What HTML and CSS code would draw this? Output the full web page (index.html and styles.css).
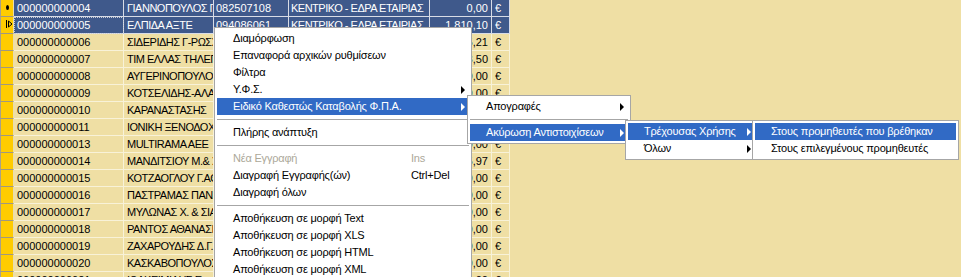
FILE: index.html
```html
<!DOCTYPE html>
<html lang="el">
<head>
<meta charset="utf-8">
<title>Προμηθευτές</title>
<link rel="stylesheet" href="styles.css">
</head>
<body>
<div class="grid">
  <div class="row sel"><div class="c ind"><span class="dot"></span></div><div class="c code">000000000004</div><div class="c name">ΓΙΑΝΝΟΠΟΥΛΟΣ ΓΕΩΡΓΙΟΣ</div><div class="c phone">082507108</div><div class="c branch">ΚΕΝΤΡΙΚΟ - ΕΔΡΑ ΕΤΑΙΡΙΑΣ</div><div class="c amt">0,00</div><div class="c cur">€</div></div>
  <div class="row sel"><div class="c ind"><svg class="arr" width="7" height="8" viewBox="0 0 7 8"><path d="M0.5 0 V8 M2.5 1 L6 4 L2.5 7 Z" fill="none" stroke="#000" stroke-width="1"/></svg></div><div class="c code focus">000000000005</div><div class="c name">ΕΛΠΙΔΑ ΑΞΤΕ</div><div class="c phone">094086061</div><div class="c branch">ΚΕΝΤΡΙΚΟ - ΕΔΡΑ ΕΤΑΙΡΙΑΣ</div><div class="c amt">1.810,10</div><div class="c cur">€</div></div>
  <div class="row"><div class="c ind"></div><div class="c code">000000000006</div><div class="c name">ΣΙΔΕΡΙΔΗΣ Γ-ΡΩΣΣΙΔΗΣ</div><div class="c phone">082504411</div><div class="c branch">ΚΕΝΤΡΙΚΟ - ΕΔΡΑ ΕΤΑΙΡΙΑΣ</div><div class="c amt">1.235,21</div><div class="c cur">€</div></div>
  <div class="row"><div class="c ind"></div><div class="c code">000000000007</div><div class="c name">ΤΙΜ ΕΛΛΑΣ ΤΗΛΕΠΙΚΟΙΝΩΝΙΕΣ</div><div class="c phone">094505500</div><div class="c branch">ΚΕΝΤΡΙΚΟ - ΕΔΡΑ ΕΤΑΙΡΙΑΣ</div><div class="c amt">18,50</div><div class="c cur">€</div></div>
  <div class="row"><div class="c ind"></div><div class="c code">000000000008</div><div class="c name">ΑΥΓΕΡΙΝΟΠΟΥΛΟΣ</div><div class="c phone">082503320</div><div class="c branch">ΚΕΝΤΡΙΚΟ - ΕΔΡΑ ΕΤΑΙΡΙΑΣ</div><div class="c amt">0,00</div><div class="c cur">€</div></div>
  <div class="row"><div class="c ind"></div><div class="c code">000000000009</div><div class="c name">ΚΟΤΣΕΛΙΔΗΣ-ΑΛΑΤΣΙΔΗΣ</div><div class="c phone">082509917</div><div class="c branch">ΚΕΝΤΡΙΚΟ - ΕΔΡΑ ΕΤΑΙΡΙΑΣ</div><div class="c amt">0,00</div><div class="c cur">€</div></div>
  <div class="row"><div class="c ind"></div><div class="c code">000000000010</div><div class="c name">ΚΑΡΑΝΑΣΤΑΣΗΣ</div><div class="c phone">082501245</div><div class="c branch">ΚΕΝΤΡΙΚΟ - ΕΔΡΑ ΕΤΑΙΡΙΑΣ</div><div class="c amt">0,00</div><div class="c cur">€</div></div>
  <div class="row"><div class="c ind"></div><div class="c code">000000000011</div><div class="c name">ΙΟΝΙΚΗ ΞΕΝΟΔΟΧ. ΕΠΙΧ.</div><div class="c phone">094012345</div><div class="c branch">ΚΕΝΤΡΙΚΟ - ΕΔΡΑ ΕΤΑΙΡΙΑΣ</div><div class="c amt">0,00</div><div class="c cur">€</div></div>
  <div class="row"><div class="c ind"></div><div class="c code">000000000013</div><div class="c name">MULTIRAMA AEE</div><div class="c phone">094433210</div><div class="c branch">ΚΕΝΤΡΙΚΟ - ΕΔΡΑ ΕΤΑΙΡΙΑΣ</div><div class="c amt">0,00</div><div class="c cur">€</div></div>
  <div class="row"><div class="c ind"></div><div class="c code">000000000014</div><div class="c name">ΜΑΝΔΙΤΣΙΟΥ Μ.&amp; ΣΙΑ</div><div class="c phone">082506678</div><div class="c branch">ΚΕΝΤΡΙΚΟ - ΕΔΡΑ ΕΤΑΙΡΙΑΣ</div><div class="c amt">245,97</div><div class="c cur">€</div></div>
  <div class="row"><div class="c ind"></div><div class="c code">000000000015</div><div class="c name">ΚΟΤΖΑΟΓΛΟΥ Γ.ΑΘ.</div><div class="c phone">082502219</div><div class="c branch">ΚΕΝΤΡΙΚΟ - ΕΔΡΑ ΕΤΑΙΡΙΑΣ</div><div class="c amt">0,00</div><div class="c cur">€</div></div>
  <div class="row"><div class="c ind"></div><div class="c code">000000000016</div><div class="c name">ΠΑΣΤΡΑΜΑΣ ΠΑΝΑΓΙΩΤΗΣ</div><div class="c phone">082507761</div><div class="c branch">ΚΕΝΤΡΙΚΟ - ΕΔΡΑ ΕΤΑΙΡΙΑΣ</div><div class="c amt">0,00</div><div class="c cur">€</div></div>
  <div class="row"><div class="c ind"></div><div class="c code">000000000017</div><div class="c name">ΜΥΛΩΝΑΣ Χ. &amp; ΣΙΑ</div><div class="c phone">082505543</div><div class="c branch">ΚΕΝΤΡΙΚΟ - ΕΔΡΑ ΕΤΑΙΡΙΑΣ</div><div class="c amt">0,00</div><div class="c cur">€</div></div>
  <div class="row"><div class="c ind"></div><div class="c code">000000000018</div><div class="c name">ΡΑΝΤΟΣ ΑΘΑΝΑΣΙΟΣ</div><div class="c phone">082508812</div><div class="c branch">ΚΕΝΤΡΙΚΟ - ΕΔΡΑ ΕΤΑΙΡΙΑΣ</div><div class="c amt">0,00</div><div class="c cur">€</div></div>
  <div class="row"><div class="c ind"></div><div class="c code">000000000019</div><div class="c name">ΖΑΧΑΡΟΥΔΗΣ Δ.Γ.</div><div class="c phone">082503390</div><div class="c branch">ΚΕΝΤΡΙΚΟ - ΕΔΡΑ ΕΤΑΙΡΙΑΣ</div><div class="c amt">0,00</div><div class="c cur">€</div></div>
  <div class="row"><div class="c ind"></div><div class="c code">000000000020</div><div class="c name">ΚΑΣΚΑΒΟΠΟΥΛΟΣ</div><div class="c phone">082504456</div><div class="c branch">ΚΕΝΤΡΙΚΟ - ΕΔΡΑ ΕΤΑΙΡΙΑΣ</div><div class="c amt">0,00</div><div class="c cur">€</div></div>
  <div class="row"><div class="c ind"></div><div class="c code">000000000021</div><div class="c name">ΙΩΑΚΕΙΜΙΔΗΣ Ε.</div><div class="c phone">082501128</div><div class="c branch">ΚΕΝΤΡΙΚΟ - ΕΔΡΑ ΕΤΑΙΡΙΑΣ</div><div class="c amt">0,00</div><div class="c cur">€</div></div>
</div>

<div class="menu m1">
  <div class="item"><span class="label">Διαμόρφωση</span></div>
  <div class="item"><span class="label">Επαναφορά αρχικών ρυθμίσεων</span></div>
  <div class="item"><span class="label">Φίλτρα</span></div>
  <div class="item sub"><span class="label">Υ.Φ.Σ.</span></div>
  <div class="item sub hl"><span class="label">Ειδικό Καθεστώς Καταβολής Φ.Π.Α.</span></div>
  <div class="sep"></div>
  <div class="item"><span class="label">Πλήρης ανάπτυξη</span></div>
  <div class="sep"></div>
  <div class="item dis"><span class="label">Νέα Εγγραφή</span><span class="key">Ins</span></div>
  <div class="item"><span class="label">Διαγραφή Εγγραφής(ών)</span><span class="key">Ctrl+Del</span></div>
  <div class="item"><span class="label">Διαγραφή όλων</span></div>
  <div class="sep"></div>
  <div class="item"><span class="label">Αποθήκευση σε μορφή Text</span></div>
  <div class="item"><span class="label">Αποθήκευση σε μορφή XLS</span></div>
  <div class="item"><span class="label">Αποθήκευση σε μορφή HTML</span></div>
  <div class="item"><span class="label">Αποθήκευση σε μορφή XML</span></div>
</div>

<div class="menu m2">
  <div class="item sub"><span class="label">Απογραφές</span></div>
  <div class="sep"></div>
  <div class="item sub hl"><span class="label">Ακύρωση Αντιστοιχίσεων</span></div>
</div>

<div class="menu m3">
  <div class="item sub hl"><span class="label">Τρέχουσας Χρήσης</span></div>
  <div class="item sub"><span class="label">Όλων</span></div>
</div>

<div class="menu m4">
  <div class="item hl"><span class="label">Στους προμηθευτές που βρέθηκαν</span></div>
  <div class="item"><span class="label">Στους επιλεγμένους προμηθευτές</span></div>
</div>
</body>
</html>
```

FILE: styles.css
```css
html, body {
  margin: 0;
  padding: 0;
  background: #efdfa4;
  height: 100%;
  overflow: hidden;
}

body {
  font-family: "Liberation Sans", Arial, sans-serif;
  font-size: 11px;
  color: #000;
}

.grid {
  display: flex;
  flex-direction: column;
  width: 510px;
}

.row {
  display: flex;
  height: 17px;
}

.c {
  box-sizing: border-box;
  height: 17px;
  line-height: 16px;
  border-right: 1px solid #f8f2d8;
  border-bottom: 1px solid #f8f2d8;
  white-space: nowrap;
  overflow: hidden;
  padding-left: 2px;
  background: #efdfa4;
}

.ind {
  width: 14px;
  padding: 0;
  background: #ffcc00;
  border-left: 1px solid #a8a08a;
  border-right: 1px solid #e8dcb0;
  border-bottom: 1px solid #a09880;
  position: relative;
}
.code { width: 110px; padding-left: 3px; }
.name { width: 90px; padding-left: 3px; letter-spacing: -0.5px; }
.phone { width: 75px; padding-left: 2px; }
.branch { width: 141px; padding-left: 2px; letter-spacing: -0.5px; }
.amt { width: 62px; text-align: right; padding-right: 3px; }
.cur { width: 18px; padding-left: 3px; }

.sel .c:not(.ind) {
  background: #3f598b;
  color: #fff;
  border-color: #d8dce6;
}

.focus {
  outline: 1px dotted #c8ccd6;
  outline-offset: -1px;
}

.dot {
  position: absolute;
  left: 5px;
  top: 5px;
  width: 3px;
  height: 5px;
  border-radius: 50%;
  background: #000;
}

.arr {
  position: absolute;
  left: 5px;
  top: 3px;
}

/* popup menus */
.menu {
  position: absolute;
  box-sizing: border-box;
  background: #fff;
  border: 1px solid #a6a6a6;
  padding: 2px;
  font-family: "Liberation Sans", Arial, sans-serif;
  font-size: 11px;
  letter-spacing: -0.2px;
}

.m1 { left: 214px; top: 27px; width: 258px; }
.m2 { left: 467px; top: 95px; width: 164px; }
.m3 { left: 625px; top: 120px; width: 133px; }
.m4 { left: 752px; top: 120px; width: 207px; }

.item {
  position: relative;
  display: flex;
  height: 17px;
  line-height: 17px;
  padding-left: 16px;
  white-space: nowrap;
}

.m1 .label { width: 178px; }

.item.hl {
  background: #316ac5;
  color: #fff;
}

.item.dis { color: #aca899; }

.item.sub::after {
  content: "";
  position: absolute;
  right: 4px;
  top: 5px;
  border-left: 4px solid #000;
  border-top: 4px solid transparent;
  border-bottom: 4px solid transparent;
}
.item.sub.hl::after { border-left-color: #fff; }

.sep {
  height: 9px;
  display: flex;
  align-items: center;
}
.sep::after {
  content: "";
  flex: 1;
  height: 1px;
  background: #a6a6a6;
}
```
